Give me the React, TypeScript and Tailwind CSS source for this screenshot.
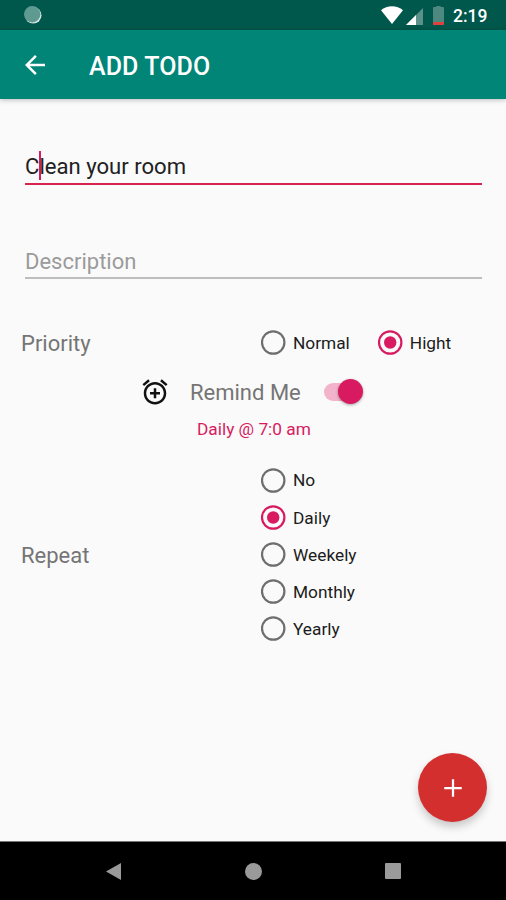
/**
 * Add Todo screen
 * - status bar, app bar
 * - todo form (title, description, priority, reminder, repeat)
 * - floating add button, system navigation
 */
import { useState } from 'react';

const REPEATS = ['No', 'Daily', 'Weekely', 'Monthly', 'Yearly'];

function StatusBar() {
  return (
    <div className="flex h-[30px] shrink-0 items-center bg-[#00574b] pl-6 pr-[19px]">
      <svg className="h-[18px] w-[18px]" viewBox="0 0 18 18">
        <circle cx="9.2" cy="9.3" r="8.3" fill="#d5e5e2" />
        <circle cx="8.2" cy="8.2" r="8.2" fill="#5f9a91" />
      </svg>
      <svg className="ml-auto h-[18px] w-[22px]" viewBox="0 0 22 18">
        <path d="M0 4.2C6-1.2 16-1.2 22 4.2L11 18z" fill="#fff" />
      </svg>
      <svg className="ml-[3px] mt-[2px] h-[17px] w-[17px]" viewBox="0 0 17 17">
        <path d="M17 0v17H0z" fill="#5b9188" />
        <path d="M10 7v10H0z" fill="#fff" />
      </svg>
      <svg className="ml-[10px] mt-px h-[19px] w-[11px]" viewBox="0 0 11 19">
        <path d="M3.3 0h4.4v1H10q1 0 1 1v16q0 1-1 1H1q-1 0-1-1V2q0-1 1-1h2.3z" fill="#4d8980" />
        <path d="M0 16h11v2q0 1-1 1H1q-1 0-1-1z" fill="#e2403c" />
      </svg>
      <span className="ml-[9px] mt-[4px] w-[34px] whitespace-nowrap text-[17.5px] font-medium leading-none text-white">2:19</span>
    </div>
  );
}

function AppBar() {
  return (
    <header className="z-10 flex h-[68.5px] shrink-0 items-center bg-[#008577] pl-5 text-white shadow-[0_1px_5px_rgba(0,0,0,0.25)]">
      <svg className="mt-px h-[30px] w-[30px]" viewBox="0 0 24 24" fill="currentColor">
        <path d="M20 11H7.83l5.59-5.59L12 4l-8 8 8 8 1.41-1.41L7.83 13H20v-2z" />
      </svg>
      <h1 className="ml-[39px] mt-1 text-[25px] font-medium tracking-[0.1px]">ADD TODO</h1>
    </header>
  );
}

function Radio({ label, checked, onSelect }: { label: string; checked: boolean; onSelect: () => void }) {
  return (
    <button type="button" role="radio" aria-checked={checked} onClick={onSelect} className="flex h-[37.1px] items-center">
      <svg className={checked ? 'h-[25px] w-[25px] text-[#d81b60]' : 'h-[25px] w-[25px] text-[#6e6e6e]'} viewBox="0 0 25 25">
        <circle cx="12.2" cy="12.5" r="11.2" fill="none" stroke="currentColor" strokeWidth="2.2" />
        {checked && <circle cx="12.2" cy="12.5" r="6.2" fill="currentColor" />}
      </svg>
      <span className="ml-[7px] mt-[2.6px] text-[17.3px] text-[#1c1c1c]">{label}</span>
    </button>
  );
}

export default function App() {
  const [priority, setPriority] = useState('Hight');
  const [repeat, setRepeat] = useState('Daily');

  return (
    <div className="flex h-[900px] w-[506px] flex-col overflow-hidden bg-[#fafafa] font-['Roboto',sans-serif]">
      <StatusBar />
      <AppBar />

      <main className="relative flex-1">
        <div className="ml-[25px] mr-6 mt-[50px] flex h-[36px] items-center border-b-2 border-[#d6244f] text-[22.1px] text-[#212121]">
          <span className="mt-[2px]">C</span>
          <span className="-mr-[2px] mb-px h-[29px] w-[2px] bg-[#d81b60]" />
          <span className="mt-[2px]">lean your room</span>
        </div>
        <div className="ml-[25px] mr-6 mt-[57px] flex h-[37px] items-center border-b-2 border-[#bdbdbd] pt-[5px] text-[22px] text-[#9b9b9b]">
          Description
        </div>

        <div className="mt-[45.5px] flex items-center pl-5">
          <span className="mt-[2px] w-[241px] pl-px text-[22px] text-[#757575]">Priority</span>
          <div className="flex gap-7">
            <Radio label="Normal" checked={priority === 'Normal'} onSelect={() => setPriority('Normal')} />
            <Radio label="Hight" checked={priority === 'Hight'} onSelect={() => setPriority('Hight')} />
          </div>
        </div>

        <div className="mt-[14.5px] flex h-[34px] items-center pl-[140px]">
          <svg className="mb-[2px] h-[30px] w-[30px]" viewBox="0 0 24 24" fill="#111">
            <path d="M7.88 3.39L6.6 1.86 2 5.71l1.29 1.53 4.59-3.85zM22 5.72l-4.6-3.86-1.29 1.53 4.6 3.86L22 5.72zM12 4c-4.97 0-9 4.03-9 9s4.02 9 9 9c4.97 0 9-4.03 9-9s-4.03-9-9-9zm0 16c-3.87 0-7-3.13-7-7s3.13-7 7-7 7 3.13 7 7-3.13 7-7 7zm1-11h-2v3H8v2h3v3h2v-3h3v-2h-3V9z" />
          </svg>
          <span className="ml-5 w-[134px] text-[22px] text-[#757575]">Remind Me</span>
          <span className="mb-[2px] flex h-[18px] w-[36px] items-center justify-end rounded-full bg-[#f3b3ca]">
            <span className="-mr-[3px] h-[25px] w-[25px] shrink-0 rounded-full bg-[#d81b60] shadow-[0_1px_3px_rgba(0,0,0,0.35)]" />
          </span>
        </div>
        <p className="mt-[6px] pl-[197px] text-[17.3px] leading-[26px] text-[#d81b60]">Daily @ 7:0 am</p>

        <div className="mt-[20px] flex items-center pl-5">
          <span className="mt-[3px] w-[241px] pl-px text-[22px] text-[#757575]">Repeat</span>
          <div className="flex flex-col">
            {REPEATS.map((r) => (
              <Radio key={r} label={r} checked={repeat === r} onSelect={() => setRepeat(r)} />
            ))}
          </div>
        </div>

        <button
          type="button"
          aria-label="Add"
          className="absolute bottom-[19px] right-[19px] flex h-[69px] w-[69px] items-center justify-center rounded-full bg-[#d32f2f] shadow-[0_5px_8px_rgba(0,0,0,0.2)]"
        >
          <svg className="h-[30px] w-[30px]" viewBox="0 0 24 24" fill="#fff">
            <path d="M19 12.9h-6.1V19h-1.8v-6.1H5v-1.8h6.1V5h1.8v6.1H19z" />
          </svg>
        </button>
      </main>

      <nav className="flex h-[59px] shrink-0 items-center border-t border-[#777] bg-black pl-[106px] text-[#9a9a9a]">
        <svg className="h-[17px] w-[15px]" viewBox="0 0 15 17" fill="currentColor">
          <path d="M0 8.5L15 0v17z" />
        </svg>
        <span className="ml-[124px] h-[17px] w-[17px] rounded-full bg-current" />
        <span className="ml-[123px] h-4 w-4 rounded-[1px] bg-current" />
      </nav>
    </div>
  );
}
